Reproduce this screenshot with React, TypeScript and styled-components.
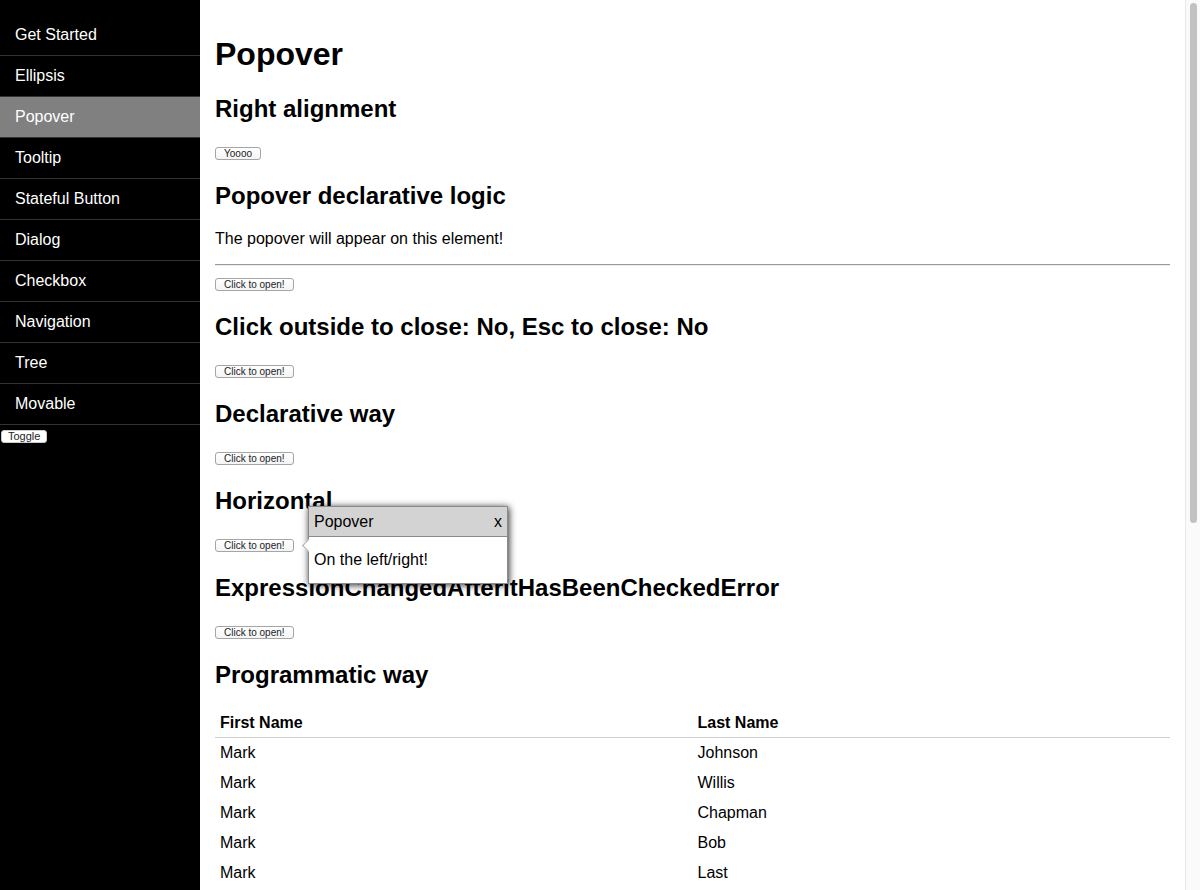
import React from "react";
import styled, { createGlobalStyle } from "styled-components";

const GlobalStyle = createGlobalStyle`
  html, body {
    margin: 0;
    padding: 0;
    height: 100%;
    overflow: hidden;
  }
  body {
    font-family: "Liberation Sans", Arial, Helvetica, sans-serif;
    font-size: 16px;
    color: #000;
  }
`;

const Layout = styled.div`
  display: flex;
  height: 100vh;
`;

const Sidebar = styled.nav`
  flex: 0 0 200px;
  background: #000;
  padding-top: 15px;
  box-sizing: border-box;
`;

const NavList = styled.ul`
  list-style: none;
  margin: 0;
  padding: 0;
`;

const NavItem = styled.li<{ $active?: boolean }>`
  height: 40px;
  line-height: 40px;
  padding: 0 15px;
  color: #fff;
  background: ${(p) => (p.$active ? "#808080" : "transparent")};
  border-bottom: 1px solid #333;
  cursor: pointer;
`;

const ToggleButton = styled.button`
  display: block;
  margin: 5px 0 0 1px;
  height: 13px;
  padding: 0 6px;
  font-family: "Liberation Sans", Arial, sans-serif;
  font-size: 11px;
  line-height: 11px;
  color: #222;
  background: #fff;
  border: 1px solid #ccc;
  border-radius: 3px;
`;

const Main = styled.main`
  flex: 1;
  min-width: 0;
  overflow: hidden;
  padding: 15px 15px 0;
`;

const ScrollTrack = styled.div`
  flex: 0 0 15px;
  box-sizing: border-box;
  padding: 3px 3px 0 4px;
  background: #fafafa;
  border-left: 1px solid #e8e8e8;
`;

const ScrollThumb = styled.div`
  height: 520px;
  border-radius: 4px;
  background: #c1c1c1;
`;

const Title = styled.h1`
  font-size: 32px;
  line-height: 37px;
  margin: 21px 0 22px;
`;

const Heading = styled.h2`
  font-size: 24px;
  line-height: 28px;
  margin: 20px 0;
`;

const Text = styled.p`
  margin: 16px 0;
  line-height: 18px;
`;

const Rule = styled.hr`
  margin: 8px 0;
  border: 0;
  border-top: 1px solid #9a9a9a;
  border-bottom: 1px solid #eee;
`;

const ButtonRow = styled.div`
  position: relative;
  height: 19px;
  box-sizing: border-box;
  padding-top: 4px;
  display: flex;
  align-items: flex-start;
`;

const SmallButton = styled.button`
  height: 13px;
  padding: 0 8px;
  font-family: "Liberation Sans", Arial, sans-serif;
  font-size: 10px;
  line-height: 11px;
  color: #222;
  background: linear-gradient(#fff, #f4f4f4);
  border: 1px solid #a5a5a5;
  border-radius: 3px;
  cursor: pointer;
`;

const Popover = styled.div`
  position: absolute;
  left: 93px;
  top: 50%;
  transform: translateY(-50%);
  width: 200px;
  box-sizing: border-box;
  background: #fff;
  border: 1px solid #8a8a8a;
  box-shadow: 1px 1px 7px rgba(0, 0, 0, 0.85);
  z-index: 2;
`;

const PopoverArrow = styled.span`
  position: absolute;
  left: -5px;
  top: 34px;
  width: 8px;
  height: 8px;
  background: #fff;
  border-left: 1px solid #b0b0b0;
  border-bottom: 1px solid #b0b0b0;
  transform: rotate(45deg);
`;

const PopoverHeader = styled.div`
  display: flex;
  justify-content: space-between;
  padding: 5px;
  line-height: 19px;
  background: #d3d3d3;
  border-bottom: 1px solid #8a8a8a;
`;

const PopoverBody = styled.div`
  padding: 14px 5px;
  line-height: 18px;
`;

const Table = styled.table`
  width: 100%;
  border-collapse: collapse;
  table-layout: fixed;
`;

const HeadCell = styled.th`
  text-align: left;
  padding: 5px;
  height: 18px;
  line-height: 18px;
  border-bottom: 1px solid #d0d0d0;
`;

const Cell = styled.td`
  padding: 6px 5px;
  line-height: 18px;
`;

const navItems = [
  "Get Started",
  "Ellipsis",
  "Popover",
  "Tooltip",
  "Stateful Button",
  "Dialog",
  "Checkbox",
  "Navigation",
  "Tree",
  "Movable",
];

const people = [
  ["Mark", "Johnson"],
  ["Mark", "Willis"],
  ["Mark", "Chapman"],
  ["Mark", "Bob"],
  ["Mark", "Last"],
];

const Section = ({ title, children }: { title: string; children: React.ReactNode }) => (
  <>
    <Heading>{title}</Heading>
    {children}
  </>
);

export default function App() {
  return (
    <>
      <GlobalStyle />
      <Layout>
        <Sidebar>
          <NavList>
            {navItems.map((item) => (
              <NavItem key={item} $active={item === "Popover"}>
                {item}
              </NavItem>
            ))}
          </NavList>
          <ToggleButton>Toggle</ToggleButton>
        </Sidebar>
        <Main>
          <Title>Popover</Title>
          <Section title="Right alignment">
            <ButtonRow>
              <SmallButton>Yoooo</SmallButton>
            </ButtonRow>
          </Section>
          <Section title="Popover declarative logic">
            <Text>The popover will appear on this element!</Text>
            <Rule />
            <ButtonRow>
              <SmallButton>Click to open!</SmallButton>
            </ButtonRow>
          </Section>
          <Section title="Click outside to close: No, Esc to close: No">
            <ButtonRow>
              <SmallButton>Click to open!</SmallButton>
            </ButtonRow>
          </Section>
          <Section title="Declarative way">
            <ButtonRow>
              <SmallButton>Click to open!</SmallButton>
            </ButtonRow>
          </Section>
          <Section title="Horizontal">
            <ButtonRow>
              <SmallButton>Click to open!</SmallButton>
              <Popover>
                <PopoverArrow />
                <PopoverHeader>
                  <span>Popover</span>
                  <span>x</span>
                </PopoverHeader>
                <PopoverBody>On the left/right!</PopoverBody>
              </Popover>
            </ButtonRow>
          </Section>
          <Section title="ExpressionChangedAfterItHasBeenCheckedError">
            <ButtonRow>
              <SmallButton>Click to open!</SmallButton>
            </ButtonRow>
          </Section>
          <Section title="Programmatic way">
            <Table>
              <thead>
                <tr>
                  <HeadCell>First Name</HeadCell>
                  <HeadCell>Last Name</HeadCell>
                </tr>
              </thead>
              <tbody>
                {people.map(([first, last]) => (
                  <tr key={last}>
                    <Cell>{first}</Cell>
                    <Cell>{last}</Cell>
                  </tr>
                ))}
              </tbody>
            </Table>
          </Section>
        </Main>
        <ScrollTrack>
          <ScrollThumb />
        </ScrollTrack>
      </Layout>
    </>
  );
}
